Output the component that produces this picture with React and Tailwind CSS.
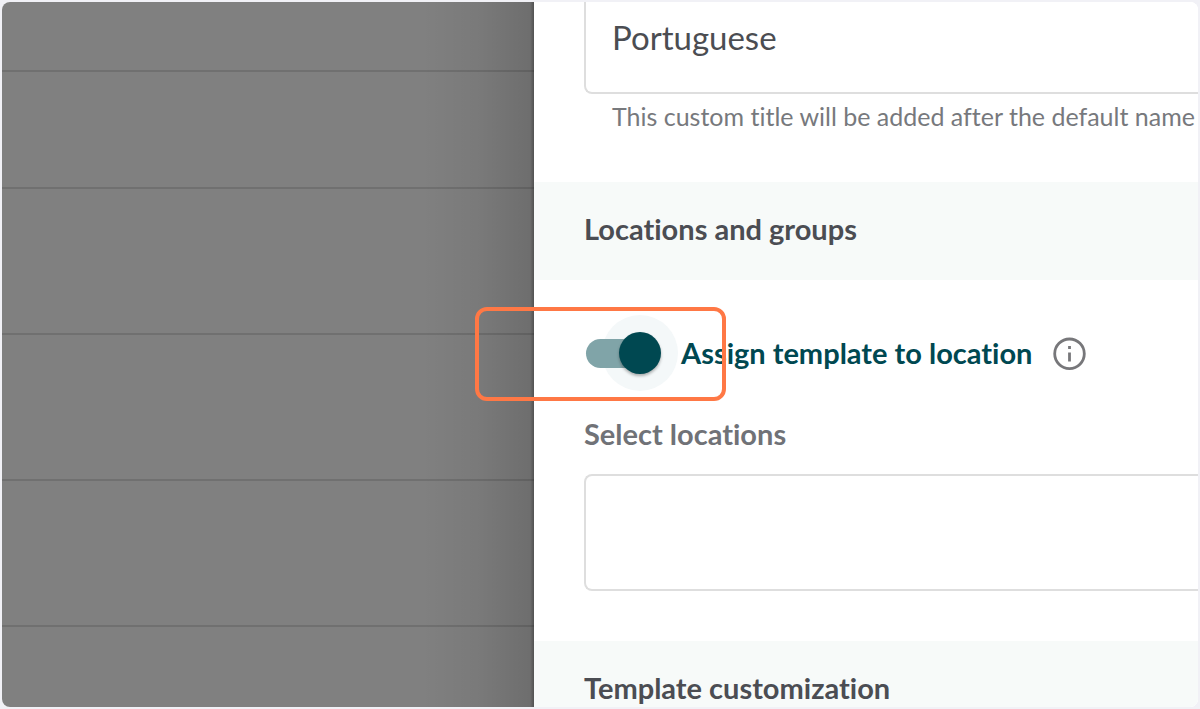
import { useState } from "react";

function BackdropRows() {
  return (
    <div className="relative flex w-[532px] shrink-0 flex-col bg-[#808080]" aria-hidden="true">
      <div className="h-[70px] border-b-2 border-[#707070]" />
      <div className="h-[117px] border-b-2 border-[#707070]" />
      <div className="h-[146px] border-b-2 border-[#707070]" />
      <div className="h-[146px] border-b-2 border-[#707070]" />
      <div className="h-[146px] border-b-2 border-[#707070]" />
      <div className="h-20 grow" />
      <div className="absolute inset-y-0 right-0 w-28 bg-linear-to-r from-black/0 via-black/5 to-black/15" />
      <div className="absolute inset-y-0 right-0 w-1 bg-linear-to-r from-black/0 to-black/25" />
    </div>
  );
}

function SectionHeading({ children }) {
  return (
    <h2 className="bg-[#f7faf9] pb-1 pl-[50px] text-[29px] leading-[94px] font-bold text-[#4b4d53]">
      {children}
    </h2>
  );
}

function Toggle({ id, checked, onChange }) {
  return (
    <span className="relative flex h-[30px] w-[75px] shrink-0 items-center">
      <span className="absolute -top-[23px] left-[16px] size-[76px] rounded-full bg-[#f4f8f9]" />
      <span className="relative h-[29px] w-[68px] rounded-full bg-[#80a4a8]" />
      <span className="absolute -top-[6px] left-[33px] size-[42px] rounded-full bg-[#004851] shadow-[0_2px_3px_rgba(0,0,0,0.3)]" />
      <input
        id={id}
        type="checkbox"
        role="switch"
        checked={checked}
        onChange={onChange}
        className="absolute inset-0 size-full cursor-pointer opacity-0"
      />
    </span>
  );
}

export default function App() {
  const [assigned, setAssigned] = useState(true);

  return (
    <div className="flex min-h-screen bg-[#f1f1f6] p-[2px] font-['Lato','Open_Sans',sans-serif] [font-variant-ligatures:none]">
      <main className="flex max-h-[705px] min-w-0 grow overflow-hidden rounded-lg bg-white">
        <BackdropRows />
        <div className="min-w-0 grow bg-white">
          <div className="pb-[50px] pl-[50px]">
            <input
              aria-label="Custom title"
              aria-describedby="title-help"
              defaultValue="Portuguese"
              className="block h-[92px] w-full rounded-bl-lg border-b-2 border-l-2 border-[#dedede] bg-white pb-5 pl-[26px] text-[33px] text-[#4b4d52] outline-none"
            />
            <p id="title-help" className="pt-[6px] pl-[28px] text-[25px] leading-8 whitespace-nowrap text-[#77797d]">
              This custom title will be added after the default name of
            </p>
          </div>

          <SectionHeading>Locations and groups</SectionHeading>

          <div className="pt-[50px] pb-[50px] pl-[50px]">
            <div className="relative flex h-[46px] items-center pl-[2px]">
              <Toggle id="assign" checked={assigned} onChange={(e) => setAssigned(e.target.checked)} />
              <label htmlFor="assign" className="pl-[20px] text-[29px] font-bold whitespace-nowrap text-[#004851]">
                Assign template to location
              </label>
              <button type="button" aria-label="More information" className="ml-5">
                <svg viewBox="0 0 34 34" className="size-[34px]" fill="none" stroke="#77777a">
                  <circle cx="17.5" cy="17.8" r="14.8" strokeWidth="2.8" />
                  <path d="M17.5 16.5v9" strokeWidth="2.8" />
                  <path d="M17.5 10v3" strokeWidth="2.8" />
                </svg>
              </button>
              <div className="pointer-events-none absolute -top-[23px] -left-[109px] h-[94px] w-[251px] rounded-xl border-4 border-[#ff7845]" />
            </div>

            <label htmlFor="locations" className="block pt-[38px] text-[29px] leading-[40px] font-bold text-[#707277]">
              Select locations
            </label>
            <input
              id="locations"
              className="mt-5 block h-[117px] w-full rounded-l-lg border-y-2 border-l-2 border-[#dedede] bg-white px-7 text-[33px] outline-none"
            />
          </div>

          <SectionHeading>Template customization</SectionHeading>
        </div>
      </main>
    </div>
  );
}
